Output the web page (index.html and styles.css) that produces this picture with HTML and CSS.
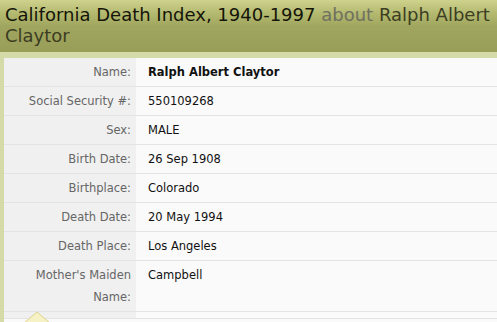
FILE: index.html
```html
<!DOCTYPE html>
<html>
<head>
<meta charset="utf-8">
<link rel="stylesheet" href="styles.css">
</head>
<body>
<div class="page">
  <h1 class="title"><span class="db">California Death Index, 1940-1997</span> <span class="about">about</span> <span class="person">Ralph Albert Claytor</span></h1>
  <div class="frame">
    <div class="panel">
      <table class="record">
        <tr><th>Name:</th><td class="strong">Ralph Albert Claytor</td></tr>
        <tr><th>Social Security #:</th><td>550109268</td></tr>
        <tr><th>Sex:</th><td>MALE</td></tr>
        <tr><th>Birth Date:</th><td>26 Sep 1908</td></tr>
        <tr><th>Birthplace:</th><td>Colorado</td></tr>
        <tr><th>Death Date:</th><td>20 May 1994</td></tr>
        <tr><th>Death Place:</th><td>Los Angeles</td></tr>
        <tr><th>Mother's Maiden Name:</th><td>Campbell</td></tr>
        <tr><th></th><td></td></tr>
      </table>
      <svg class="pointer" width="28" height="12" viewBox="0 0 28 12"><path d="M1 12 L14 1 L27 12" fill="#f7f2c6" stroke="#dcd38f" stroke-width="1"/></svg>
    </div>
  </div>
</div>
</body>
</html>
```

FILE: styles.css
```css
html, body {
  margin: 0;
  padding: 0;
  background: #fafafa;
  overflow: hidden;
}
.page {
  width: 497px;
  height: 322px;
  overflow: hidden;
}
.title {
  margin: 0;
  box-sizing: border-box;
  height: 52px;
  padding: 4px 5px 0 5px;
  font-family: "DejaVu Sans", Verdana, sans-serif;
  font-weight: normal;
  font-size: 18px;
  line-height: 21px;
  color: #141408;
  background: linear-gradient(to bottom, #ced28c 0px, #b3b86f 14px, #a0a65f 26px, #989e58 52px);
}
.db { color: #141408; }
.about { color: #6f705f; }
.person { color: #3c3d22; }
.frame {
  background: #d5dba8;
  padding: 6px 0 0 4px;
}
.panel {
  position: relative;
  background: #fafafa;
  height: 300px;
}
.record {
  border-collapse: collapse;
  width: 100%;
  font-family: "DejaVu Sans", Verdana, sans-serif;
  font-size: 11.5px;
  line-height: 22px;
}
.record th {
  width: 132px;
  box-sizing: border-box;
  text-align: right;
  font-weight: normal;
  color: #666;
  background: #f0f0f0;
  padding: 3px 5px 3px 5px;
  vertical-align: top;
  border-bottom: 1px solid #e3e3e3;
}
.record td {
  color: #111;
  padding: 3px 8px 3px 12px;
  vertical-align: top;
  border-bottom: 1px solid #e3e3e3;
}
.record .strong { font-weight: bold; }
.pointer {
  position: absolute;
  left: 19px;
  top: 253px;
}
```
